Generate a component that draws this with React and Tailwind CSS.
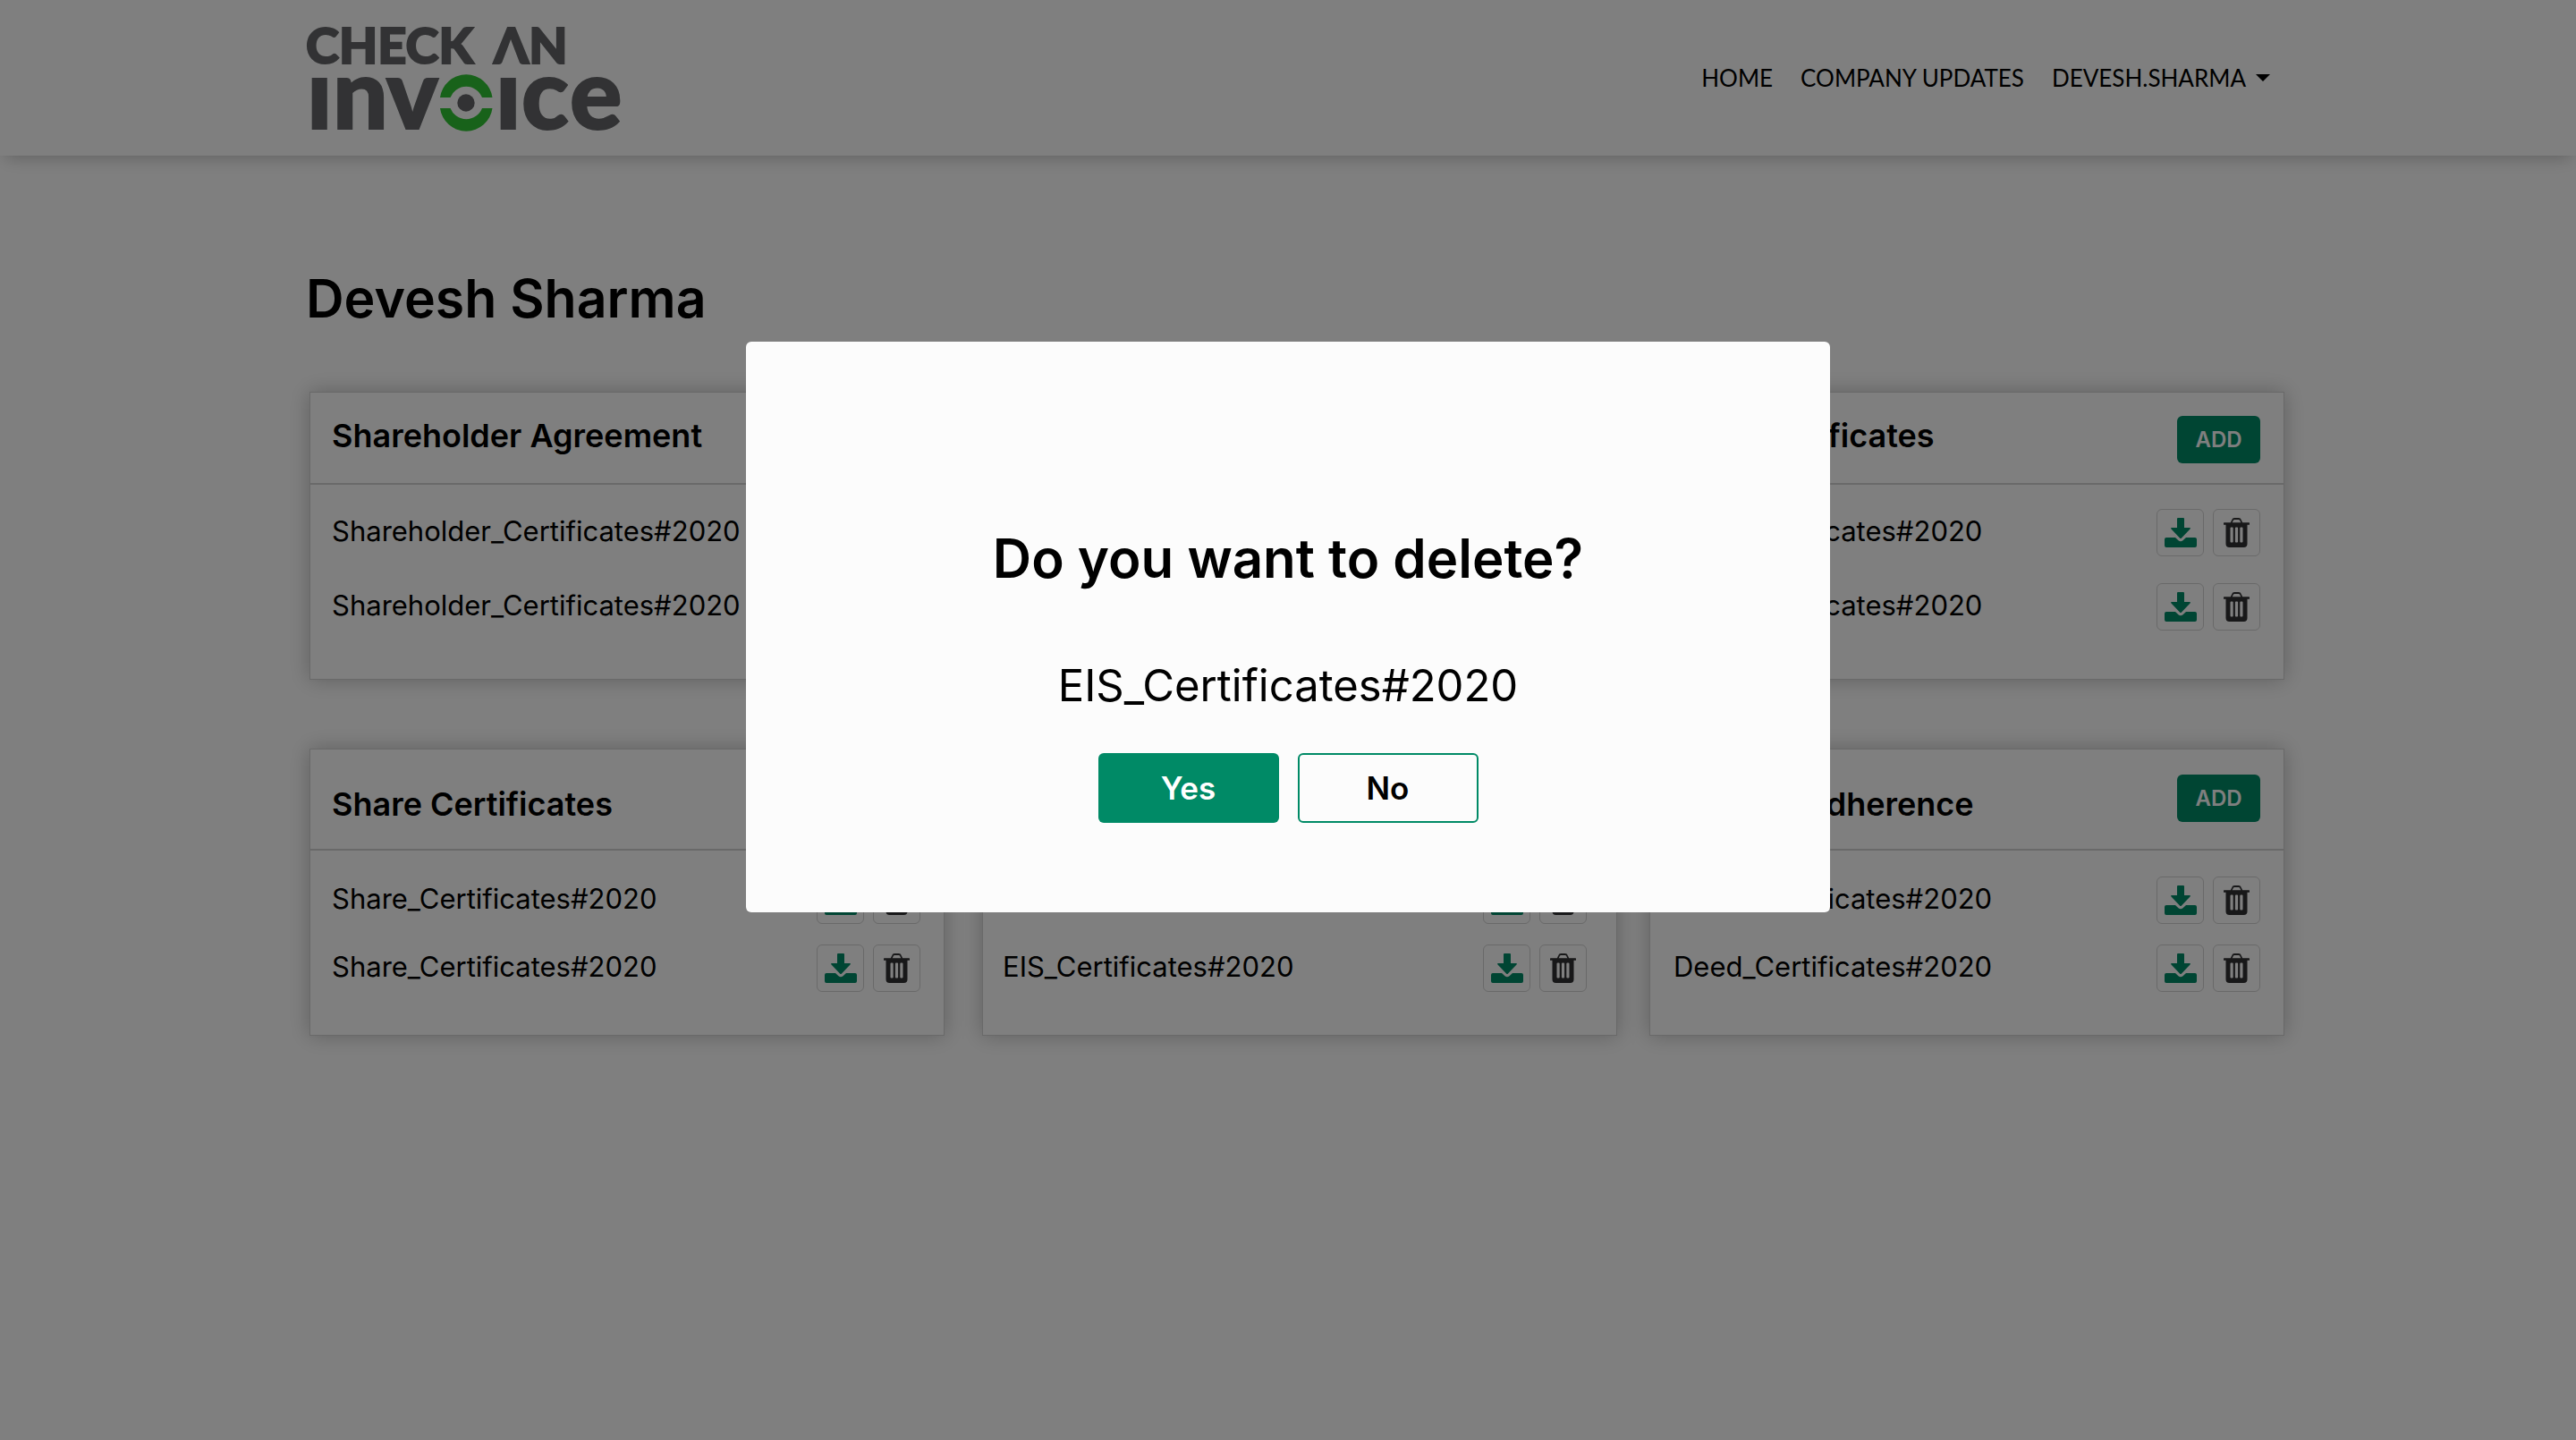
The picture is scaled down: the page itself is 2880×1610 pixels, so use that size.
const GREEN = '#008a66';

function Logo() {
  return (
    <svg
      className="block h-[119px] w-[354px] overflow-visible"
      viewBox="0 0 354 119"
      fill="#646568"
      stroke="#646568"
      fontFamily="Lato, 'Liberation Sans', sans-serif"
      fontWeight="900"
      role="img"
      aria-label="Check an invoice"
    >
      <g fontSize="56" strokeWidth="2">
        <text x="0" y="42">CHECK</text>
        <text x="210" y="42">ΛN</text>
      </g>
      <g fontSize="109" strokeWidth="2">
        <text x="1" y="115">ı</text>
        <text x="30" y="115">n</text>
        <text x="90" y="115">v</text>
        <text x="212" y="115">ı</text>
        <text x="241" y="115">c</text>
        <text x="295" y="115">e</text>
      </g>
      <g fill="#30c434" stroke="none">
        <path d="M150 80 A29.5 29.5 0 0 1 208.500 80 H197 A19 19 0 0 0 161.500 80 Z" />
        <path d="M150 92 A29.5 29.5 0 0 0 208.500 92 H197 A19 19 0 0 1 161.500 92 Z" />
      </g>
      <circle cx="179" cy="86" r="9.700" stroke="none" />
    </svg>
  );
}

function DownloadIcon() {
  return (
    <svg className="block h-[33px] w-9" viewBox="0 0 36 33" fill={GREEN} aria-hidden="true">
      <path d="M15 0H21a1 1 0 0 1 1 1V11H28q1.800 0 .5 1.500L19 22.500q-1 1-2 0L7.500 12.500Q6.200 11 8 11H14V1a1 1 0 0 1 1-1Z" />
      <path d="M2 22H12l3.500 3.300q2.500 2 5 0L24 22H34q2 0 2 2v7q0 2-2 2H2q-2 0-2-2V24q0-2 2-2Z" />
    </svg>
  );
}

function TrashIcon() {
  return (
    <svg className="block h-[33px] w-[29px]" viewBox="0 0 29 33" aria-hidden="true">
      <path d="M8.500 6 10 2.500Q10.600 1 12.200 1H16.800Q18.400 1 19 2.500L20.500 6" fill="none" stroke="#303032" strokeWidth="1.800" />
      <rect x="0" y="5.200" width="29" height="2.600" rx="0.600" fill="#303032" />
      <path
        fillRule="evenodd"
        fill="#303032"
        d="M2.500 7H26.500V29q0 4-4 4H6.500q-4 0-4-4ZM8.500 10.500q-1 0-1 1V26.500q0 1 1 1h1.200q1 0 1-1V11.500q0-1-1-1ZM13.900 10.500q-1 0-1 1V26.500q0 1 1 1h1.200q1 0 1-1V11.500q0-1-1-1ZM19.300 10.500q-1 0-1 1V26.500q0 1 1 1h1.200q1 0 1-1V11.500q0-1-1-1Z"
      />
    </svg>
  );
}

function IconButton({ label, children }) {
  return (
    <button
      type="button"
      aria-label={label}
      className="flex h-[53px] w-[53px] items-center justify-center rounded-md border border-[#d2d2d2]"
    >
      {children}
    </button>
  );
}

function Card({ title, file, top, className, pad }) {
  return (
    <section
      className={`min-w-0 flex-1 border border-[#d2d2d2] bg-white shadow-[0_0_22px_rgba(0,0,0,0.25)] ${className}`}
    >
      <header
        className={`flex items-start justify-between border-b-2 border-[#d2d2d2] ${pad} ${top ? 'h-[103px]' : 'h-[113px]'}`}
      >
        <h2 className={`text-[36px] leading-11 font-semibold ${top ? 'pt-[26px]' : 'pt-[39px]'}`}>{title}</h2>
        <div className={top ? 'pt-[26px]' : 'pt-7'}>
          <button
            type="button"
            className="h-[53px] w-[93px] rounded-md bg-[#008a66] text-center text-[24px] leading-[53px] font-semibold text-white"
          >
            ADD
          </button>
        </div>
      </header>
      <ul className={`flex flex-col ${pad} ${top ? 'gap-[30px] pt-[27px] pb-[54px]' : 'gap-[23px] pt-[29px] pb-12'}`}>
        {[0, 1].map((i) => (
          <li key={i} className="flex items-center justify-between">
            <span className="pb-1 text-[31px] leading-10">{file}</span>
            <span className="flex gap-[10px]">
              <IconButton label={`Download ${file}`}>
                <DownloadIcon />
              </IconButton>
              <IconButton label={`Delete ${file}`}>
                <TrashIcon />
              </IconButton>
            </span>
          </li>
        ))}
      </ul>
    </section>
  );
}

export default function App() {
  return (
    <div className="min-h-screen bg-white font-['Inter','Liberation_Sans',sans-serif] text-black">
      <header className="flex h-[174px] items-start justify-between px-[342px] pt-[29px] shadow-[0_8px_18px_-6px_rgba(0,0,0,0.25)]">
        <Logo />
        <nav className="flex gap-[31px] pt-[42px] font-['Lato','Liberation_Sans',sans-serif] text-[26px] leading-8">
          <a href="#home">HOME</a>
          <a href="#updates">COMPANY UPDATES</a>
          <button type="button" className="flex items-center gap-[11px]">
            DEVESH.SHARMA
            <svg className="block h-2 w-4" viewBox="0 0 16 8" aria-hidden="true">
              <path d="M0 0H16L8 8Z" />
            </svg>
          </button>
        </nav>
      </header>

      <main className="pt-[124px] pr-[326px] pl-[346px]">
        <h1 className="-ml-1 text-[59px] leading-[72px] font-semibold">Devesh Sharma</h1>
        <div className="mt-[68px] flex gap-9">
          <Card top title="Shareholder Agreement" file="Shareholder_Certificates#2020" className="mr-1.5" pad="px-6" />
          <Card top title="Board Resolution" file="Board_Certificates#2020" className="" pad="pr-[33px] pl-6" />
          <Card top title="SEIS Certificates" file="SEIS_Certificates#2020" className="" pad="px-[26px]" />
        </div>
        <div className="mt-[77px] flex gap-9">
          <Card title="Share Certificates" file="Share_Certificates#2020" className="mr-1.5" pad="pr-[26px] pl-6" />
          <Card title="EIS Certificates" file="EIS_Certificates#2020" className="" pad="pr-[33px] pl-[22px]" />
          <Card title="Deed of Adherence" file="Deed_Certificates#2020" className="" pad="px-[26px]" />
        </div>
      </main>

      <div className="fixed inset-0 flex items-start justify-center bg-black/50 pt-[382px]">
        <div
          role="dialog"
          aria-modal="true"
          aria-labelledby="confirm-title"
          className="flex h-[638px] w-[1212px] flex-col items-center rounded-md bg-[#fcfcfc] pt-[206px]"
        >
          <h2 id="confirm-title" className="text-[60px] leading-[72px] font-semibold">
            Do you want to delete?
          </h2>
          <p className="mt-[77px] text-[49px] leading-[60px]">EIS_Certificates#2020</p>
          <div className="mt-[45px] flex gap-[21px]">
            <button type="button" className="h-[78px] w-[202px] rounded-md bg-[#008a66] text-[35px] font-semibold text-white">
              Yes
            </button>
            <button type="button" className="h-[78px] w-[202px] rounded-md border-2 border-[#008a66] text-[35px] font-semibold">
              No
            </button>
          </div>
        </div>
      </div>
    </div>
  );
}
